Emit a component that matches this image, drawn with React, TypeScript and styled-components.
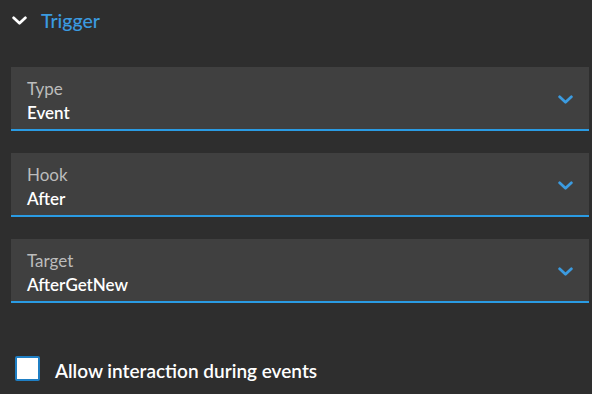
import React from "react";
import styled, { createGlobalStyle } from "styled-components";

const Global = createGlobalStyle`
  html, body { margin: 0; padding: 0; background: #2e2e2e; }
  body { font-family: "Lato", "Noto Sans", sans-serif; }
`;

const Page = styled.div`
  width: 592px;
  height: 394px;
  background: #2e2e2e;
  box-sizing: border-box;
  padding: 0 3px 0 11px;
  display: flex;
  flex-direction: column;
  overflow: hidden;
`;

const Header = styled.div`
  height: 40px;
  display: flex;
  align-items: center;
  gap: 14px;
  padding-left: 1px;
  color: #3b9be0;
  font-size: 19.5px;
  font-weight: 500;
`;

const Fields = styled.div`
  margin-top: 27px;
  display: flex;
  flex-direction: column;
  gap: 22px;
`;

const Field = styled.div`
  position: relative;
  height: 64px;
  background: #404040;
  border-bottom: 2px solid #2a9be3;
  box-sizing: border-box;
  padding: 11px 16px 0 16px;
  display: flex;
  flex-direction: column;
`;

const Label = styled.div`
  color: #bcbcbc;
  font-size: 17px;
  line-height: 21px;
`;

const Value = styled.div`
  color: #ffffff;
  font-size: 17px;
  font-weight: 600;
  line-height: 22px;
  margin-top: 3px;
`;

const Caret = styled.div`
  position: absolute;
  right: 16px;
  top: 28px;
  display: flex;
`;

const CheckRow = styled.label`
  margin-top: 52px;
  display: flex;
  align-items: center;
  gap: 15px;
  padding-left: 4px;
  color: #ffffff;
  font-size: 19px;
  font-weight: 600;
`;

const CheckText = styled.span`
  padding-top: 4px;
`;

const Box = styled.span`
  width: 25px;
  height: 25px;
  flex: none;
  box-sizing: border-box;
  background: #ffffff;
  border: 2px solid #1f7fc4;
  border-radius: 2px;
`;

const Chevron = ({ color, w, h }: { color: string; w: number; h: number }) => (
  <svg width={w} height={h} viewBox="0 0 14 8" fill="none">
    <path d="M1.5 1.5 L7 6.5 L12.5 1.5" stroke={color} strokeWidth="2.6" strokeLinecap="round" strokeLinejoin="round" />
  </svg>
);

const fields = [
  { label: "Type", value: "Event" },
  { label: "Hook", value: "After" },
  { label: "Target", value: "AfterGetNew" },
];

export default function App() {
  return (
    <>
      <Global />
      <Page>
        <Header>
          <Chevron color="#ffffff" w={15} h={9} />
          <span>Trigger</span>
        </Header>
        <Fields>
          {fields.map((f) => (
            <Field key={f.label}>
              <Label>{f.label}</Label>
              <Value>{f.value}</Value>
              <Caret>
                <Chevron color="#3b9be0" w={15} h={9} />
              </Caret>
            </Field>
          ))}
        </Fields>
        <CheckRow>
          <Box />
          <CheckText>Allow interaction during events</CheckText>
        </CheckRow>
      </Page>
    </>
  );
}
